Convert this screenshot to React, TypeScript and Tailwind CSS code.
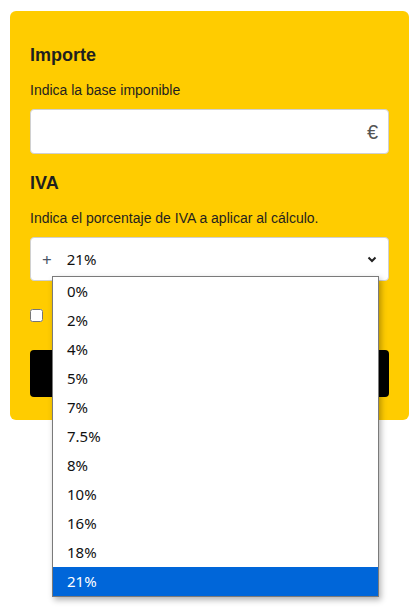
const options = ["0%", "2%", "4%", "5%", "7%", "7.5%", "8%", "10%", "16%", "18%", "21%"];

export default function App() {
  return (
    <div className="min-h-screen bg-white pt-[11px] font-['Liberation_Sans',Arial,sans-serif]">
      <div className="mx-[10px] rounded-[6px] bg-[#ffcc00] px-5 pb-[16px] pt-[33px] text-[#1f1f1f]">
        <h2 className="text-[18px] font-bold leading-[22px]">Importe</h2>
        <p className="mt-[14px] text-[14px] leading-[20px]">Indica la base imponible</p>
        <div className="mt-[9px] flex h-[45px] items-center justify-end rounded-[4px] border border-[#d0d0d0] bg-white pr-[10px]">
          <span className="text-[20px] leading-none text-[#555]">€</span>
        </div>

        <h2 className="mt-[18px] text-[18px] font-bold leading-[22px]">IVA</h2>
        <p className="mt-[14px] text-[14px] leading-[20px]">
          Indica el porcentaje de IVA a aplicar al cálculo.
        </p>
        <div className="relative mt-[9px]">
          <div className="flex h-[44px] items-center rounded-[4px] border border-[#d0d0d0] bg-white pl-[11px] pr-[11px] font-['Noto_Sans',sans-serif]">
            <span className="text-[17px] leading-none text-[#4a5568]">+</span>
            <span className="ml-[15px] text-[15px] text-[#111]">21%</span>
            <svg className="ml-auto" width="10" height="7" viewBox="0 0 10 7">
              <path d="M1.5 1.5 L5 5 L8.5 1.5" fill="none" stroke="#222" strokeWidth="2" />
            </svg>
          </div>

          <ul className="absolute left-[22px] top-[39px] z-10 w-[327px] border border-[#7a7a7a] bg-white font-['Noto_Sans',sans-serif] text-[15px] text-[#111] shadow-[2px_3px_6px_rgba(0,0,0,0.3)]">
            {options.map((o) => (
              <li
                key={o}
                className={
                  o === "21%"
                    ? "flex h-[29px] items-center bg-[#0066d9] pl-[14px] text-white"
                    : "flex h-[29px] items-center pl-[14px]"
                }
              >
                {o}
              </li>
            ))}
          </ul>
        </div>

        <div className="mt-[24px] flex h-[20px] items-center">
          <input type="checkbox" className="h-[13px] w-[13px]" />
        </div>

        <button className="mt-[25px] h-[47px] w-full rounded-[4px] bg-black" />
      </div>
    </div>
  );
}
